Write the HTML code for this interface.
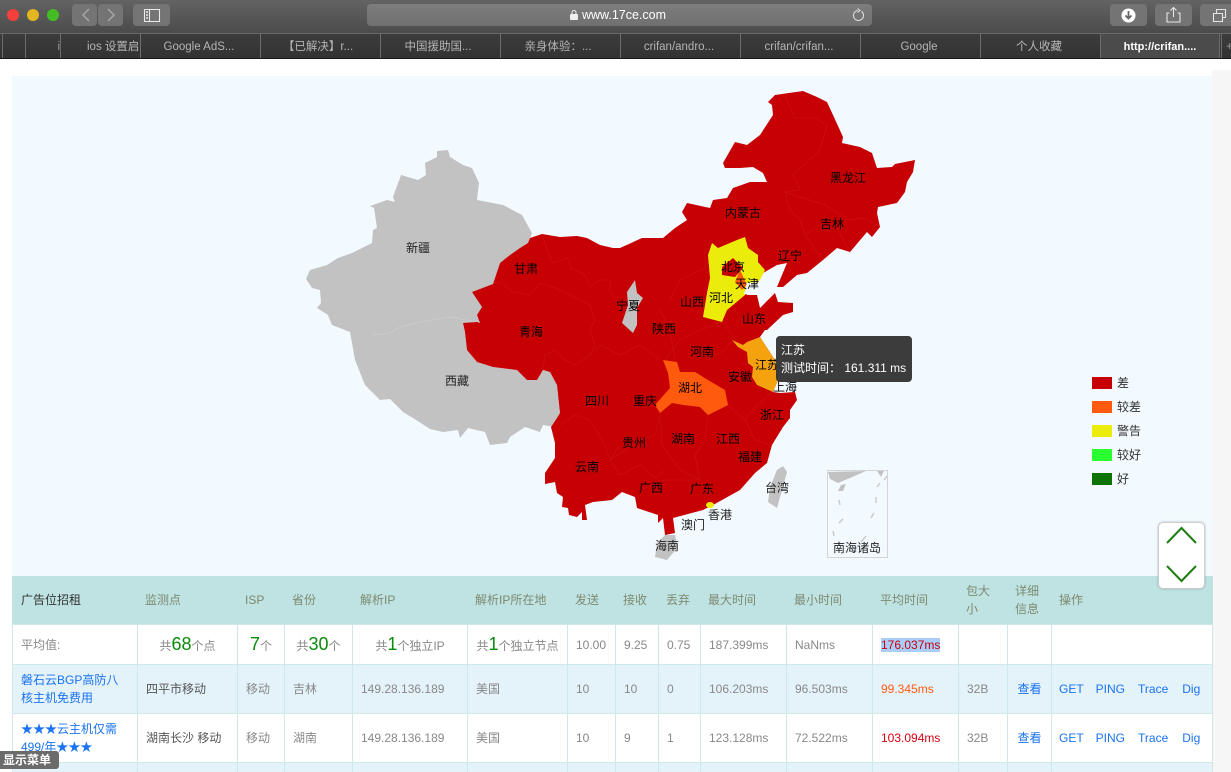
<!DOCTYPE html>
<html lang="zh">
<head>
<meta charset="utf-8">
<title>www.17ce.com</title>
<style>
*{box-sizing:border-box}
html,body{margin:0;padding:0;width:1231px;height:772px;overflow:hidden;background:#fff;font-family:"Liberation Sans","Noto Sans CJK SC",sans-serif}
#page{position:relative;width:1231px;height:772px;overflow:hidden;background:#fff}
.abs{position:absolute}
#toolbar{left:0;top:0;width:1231px;height:33px;background:linear-gradient(#636363,#4b4b4b)}
.light{position:absolute;top:9px;width:12px;height:12px;border-radius:50%}
.btn{position:absolute;top:4px;height:22px;background:#747474;border-radius:4px}
#url{position:absolute;left:367px;top:4px;width:505px;height:22px;border-radius:4px;background:linear-gradient(#7d7d7d,#707070);color:#fff;font-size:12.500px;line-height:23px;text-align:center;padding-right:3px}
#tabs{left:0;top:33px;width:1231px;height:26px;background:linear-gradient(#3c3c3c,#333);border-top:1px solid #6a6a6a;border-bottom:1px solid #191919}
.tab{position:absolute;top:0;height:24px;border-left:1px solid #6c6c6c;color:#b5b5b5;font-size:11.500px;line-height:26px;text-align:center;white-space:nowrap;overflow:hidden}
#mapbg{left:12px;top:76px;width:1200px;height:500px;background:#f2faff}
#right{left:1212px;top:70px;width:19px;height:702px;background:#f6f6f6}
svg text{font-family:"Liberation Sans","Noto Sans CJK SC",sans-serif}
#tip{left:776px;top:336px;width:136px;height:46px;background:rgba(50,50,50,.95);border-radius:4px;color:#fff;font-size:12px;line-height:18px;padding:5px 0 0 5px;white-space:nowrap}
.sw{position:absolute;left:1092px;width:20px;height:12px}
.lg{position:absolute;left:1117px;font-size:12px;color:#333;line-height:14px}
#tbl{left:12px;top:576px;width:1200px;border-collapse:collapse;table-layout:fixed;font-size:12px;color:#888}
#tbl th,#tbl td{border:1px solid #cfe8e8;padding:0 0 0 8px;font-weight:normal;text-align:left;vertical-align:middle;line-height:18px;overflow:hidden;white-space:nowrap}
#tbl th{background:#bfe3e3;color:#7d8a70;border-color:#bfe3e3;border-bottom-color:#cfe8e8;line-height:18px;padding:0 0 2px 7px}
#tbl th:first-child{padding-left:8px}
#tbl tr.h{height:48px}
#tbl tr.a{height:40px;background:#fff}
#tbl tr.b{height:49px;background:#e4f2fa}
#tbl tr.c{height:49px;background:#fff}
#tbl tr.d{height:14px;background:#e4f2fa}
#tbl tr.d td{line-height:1px;font-size:1px}
#tbl a{color:#1a73f0;text-decoration:none}
#tbl .ops{padding-left:7px}
#tbl .ops a{display:inline-block}
.g{color:#0a8a0a;font-size:18px;line-height:18px}
.ctr{text-align:center!important;padding-left:0!important}
.dark{color:#555}
#menu{left:0;top:751px;width:59px;height:18px;background:#6b6b6b;border-radius:0 3px 3px 0;color:#fff;font-size:12px;font-weight:bold;line-height:18px;padding-left:3px;white-space:nowrap}
#nav{left:1158px;top:522px;width:47px;height:67px;background:#fff;border:1px solid #ccc;border-radius:5px;box-shadow:0 0 2px rgba(0,0,0,.25)}
</style>
</head>
<body>
<div id="page">
<div id="toolbar" class="abs">
  <div class="light" style="left:7px;background:#f6403e"></div>
  <div class="light" style="left:27px;background:#e3b51f"></div>
  <div class="light" style="left:47px;background:#44bd24"></div>
  <div class="btn" style="left:72px;width:25px"></div>
  <div class="btn" style="left:98px;width:25px"></div>
  <div class="btn" style="left:133px;width:37px"></div>
  <svg class="abs" style="left:0;top:0" width="180" height="33" fill="none" stroke="#a9a9a9" stroke-width="1.400">
    <path d="M89 9l-6 6 6 6"/><path d="M108 9l6 6-6 6"/>
    <path stroke="#e8e8e8" stroke-width="1.100" d="M144.500 9.500h15v12h-15zM149.500 9.500v12"/>
    <path stroke="#e8e8e8" d="M146 12h2M146 15h2M146 18h2"/>
  </svg>
  <div id="url"><svg width="8" height="10" style="vertical-align:-1px;margin-right:4px"><rect x="0" y="4" width="8" height="6" rx="1" fill="#eee"/><path d="M2 4V2.500a2 2 0 0 1 4 0V4" fill="none" stroke="#eee"/></svg>www.17ce.com</div>
  <svg class="abs" style="left:852px;top:8px" width="14" height="15" fill="none" stroke="#dcdcdc" stroke-width="1.100"><path d="M9.500 3.500a5 5 0 1 1-3.500-1"/><path d="M5.500 0.500l2.500 2-2.500 2"/></svg>
  <div class="btn" style="left:1110px;width:37px"></div>
  <div class="btn" style="left:1155px;width:37px"></div>
  <div class="btn" style="left:1200px;width:37px"></div>
  <svg class="abs" style="left:1100px;top:0" width="131" height="33" fill="none" stroke="#e6e6e6" stroke-width="1.100">
    <circle cx="28.500" cy="15.500" r="7" fill="#fff" stroke="none"/>
    <path d="M28.500 11v7M25.500 15.500l3 3 3-3" stroke="#666" stroke-width="1.800"/>
    <path d="M69.500 13h-2.500v9h13v-9h-2.500M73.500 17V8M70.500 10.500l3-3 3 3"/>
    <path d="M113.500 13.500h9v8h-9zM116.500 13v-3.500h9v8h-3"/>
  </svg>
</div>
<div id="tabs" class="abs">
  <div class="tab" style="left:2px;width:23px"></div>
  <div class="tab" style="left:25px;width:35px;text-align:right;color:#999">i</div>
  <div class="tab" style="left:60px;width:80px;padding-left:26px;text-align:left">ios 设置启</div>
  <div class="tab" style="left:140px;width:120px;padding-right:3px">Google AdS...</div>
  <div class="tab" style="left:260px;width:120px;padding-right:5px">【已解决】r...</div>
  <div class="tab" style="left:380px;width:120px;padding-right:5px">中国援助国...</div>
  <div class="tab" style="left:500px;width:120px;padding-right:5px">亲身体验：...</div>
  <div class="tab" style="left:620px;width:120px;padding-right:3px">crifan/andro...</div>
  <div class="tab" style="left:740px;width:120px;padding-right:3px">crifan/crifan...</div>
  <div class="tab" style="left:860px;width:120px;padding-right:3px">Google</div>
  <div class="tab" style="left:980px;width:120px;padding-right:3px">个人收藏</div>
  <div class="tab" style="left:1100px;width:120px;background:#4b4b4b;color:#fff;font-weight:bold;font-size:11px;border-right:1px solid #6c6c6c">http://crifan....</div>
  <div class="tab" style="left:1221px;width:10px;color:#999;text-align:left;padding-left:4px">+</div>
</div>
<div id="right" class="abs"></div>
<div id="mapbg" class="abs"></div>
<svg class="abs" style="left:0;top:0" width="1231" height="580">
  <!-- Xinjiang and Tibet -->
  <polygon fill="#c2c2c2" points="437,151 448,150 450,157 463,165 472,168 479,183 477,200 503,205 522,215 532,233 528,243 510,255 500,263 493,284 472,292 482,307 477,315 480,323 463,323 465,332 467,350 477,362 493,367 517,370 527,380 537,380 543,370 550,372 557,385 560,413 555,427 543,425 540,432 525,427 510,437 507,443 490,445 485,432 468,428 460,438 458,430 443,432 430,429 413,418 403,412 390,399 380,400 365,385 355,360 350,332 332,325 328,315 317,308 321,303 320,290 312,288 306,279 310,270 327,265 338,258 352,253 372,243 373,230 377,228 374,208 370,206 387,200 395,202 393,197 401,175 418,180 426,175 425,163 437,157"/>
  <polyline fill="none" stroke="#cbcbcb" stroke-width="1" points="372,335 390,333 400,327 420,322 450,317 477,322"/>
  <!-- Main red -->
  <polygon fill="#c70003" points="530,238 542,234 560,237 577,236 587,238 600,245 613,248 620,248 642,238 663,238 675,228 687,220 682,212 687,203 710,208 713,200 727,198 733,188 750,182 767,182 763,173 753,167 740,168 725,168 723,163 735,142 747,145 760,135 773,115 772,105 768,102 775,95 803,91 817,97 827,102 833,115 843,137 842,143 860,147 872,153 877,168 892,167 895,164 915,160 913,172 907,182 905,192 897,203 878,207 877,213 880,227 872,237 867,232 850,252 837,248 823,260 807,273 797,275 783,287 777,287 787,263 777,265 763,273 758,282 747,295 757,295 760,308 775,293 778,302 793,303 793,312 783,315 767,330 765,330 760,337 775,360 778,380 773,392 780,393 795,392 797,400 790,410 790,418 783,427 775,440 772,445 767,463 755,473 740,490 713,505 703,510 673,518 675,533 665,535 663,518 658,523 658,515 637,508 635,497 622,492 612,500 593,502 585,505 587,520 582,520 582,512 577,517 569,515 568,508 562,507 563,497 557,493 555,482 545,484 545,473 555,458 555,443 551,427 557,418 560,413 557,385 550,372 543,370 537,380 527,380 517,370 493,367 477,362 467,350 465,332 463,323 477,322 480,323 477,315 482,307 472,292 493,284 500,263 510,255 520,248 528,243"/>
  <!-- Province borders -->
  <g fill="none" stroke="#cc1013" stroke-width="0.700">
    <polyline points="542,234 547,250 553,263 568,258 571,268 585,275 590,287 600,280 610,280 610,292 622,305"/>
    <polyline points="493,284 500,282 513,292 530,295 540,283 555,288 570,295 590,305 595,320 590,330 595,345 590,355 575,365 565,360 555,350 545,355 543,370"/>
    <polyline points="785,95 795,118 815,118 827,125 820,150 793,175 800,190 785,192 790,210 800,220 805,235 820,225 835,225 850,252"/>
    <polyline points="785,192 800,197 825,205 850,220 865,218 880,227"/>
    <polyline points="805,235 823,260"/>
    <polyline points="590,355 600,345 620,355 640,345 660,360"/>
    <polyline points="670,300 680,280 705,268"/>
    <polyline points="660,310 670,330 675,360"/>
    <polyline points="725,325 735,340"/>
    <polyline points="660,415 655,435 640,440 610,460 605,445 590,420 575,415 560,425"/>
    <polyline points="620,445 610,460 620,475 640,465 655,478 665,470"/>
    <polyline points="660,415 662,445 680,470 700,480"/>
    <polyline points="708,415 705,440 695,455 700,480 665,480 640,490"/>
    <polyline points="728,405 745,420 757,405 773,392"/>
    <polyline points="745,420 755,440 772,445"/>
    <polyline points="708,415 728,405"/>
    <polyline points="708,360 725,350 732,340"/>
    <polyline points="665,360 680,340 700,330 722,322"/>
  </g>
  <!-- Hebei -->
  <polygon fill="#ecec0a" points="745,237 748,248 758,255 758,262 765,270 760,280 748,288 745,295 727,310 722,322 703,317 707,293 710,278 708,255 712,243 718,248 737,240"/>
  <polygon fill="#c70003" points="733,258 743,268 735,277 722,275 722,267"/>
  <polygon fill="#ff5a0d" points="740,270 747,285 742,290 735,282"/>
  <polygon fill="#f2faff" points="747,283 757,282 750,295 744,294"/>
  <!-- Ningxia -->
  <polygon fill="#c2c2c2" points="635,280 637,293 643,298 637,308 637,325 633,333 622,323 628,305 627,292"/>
  <!-- Hubei -->
  <polygon fill="#ff5a0d" points="663,360 677,362 680,372 695,372 708,380 725,390 728,405 708,415 700,407 683,405 672,403 660,413 655,405 670,388 668,373"/>
  <!-- Jiangsu -->
  <polygon fill="#f5a20f" points="732,340 743,345 747,342 760,337 775,360 778,380 773,392 757,385 752,377 753,367 748,363 747,352 738,347"/>
  <!-- Taiwan, Hainan, HK -->
  <polygon fill="#c2c2c2" points="783,466 787,472 777,508 768,502 770,487 777,470"/>
  <polygon fill="#c2c2c2" points="665,535 657,543 655,557 667,560 678,547 675,535"/>
  <ellipse cx="710" cy="505" rx="4" ry="3" fill="#ecec0a"/>
  <!-- South China Sea box -->
  <rect x="827.500" y="470.500" width="60" height="87" fill="#f2faff" stroke="#d4d4d4"/>
  <polygon fill="#c2c2c2" points="828,472 866,471 850,478 838,483 830,479"/>
  <polygon fill="#c2c2c2" points="877,471 884,471 881,477"/>
  <polygon fill="#c2c2c2" points="841,485 846,484 843,491 838,491"/>
  <g stroke="#c6c6c6" stroke-width="1.300" fill="none">
    <path d="M839 500l1 5M876 497v6M877 487l3-4M884 480l3-4M874 513l-3 5M843 519l-4 4M833 531l1 5M866 536l-5 6"/>
  </g>
  <!-- Labels -->
  <g font-size="12" fill="#000" text-anchor="middle" dominant-baseline="middle" transform="translate(0,1)">
    <text x="418" y="248" fill="#222">新疆</text><text x="526" y="269">甘肃</text><text x="531" y="332">青海</text><text x="457" y="381" fill="#222">西藏</text>
    <text x="597" y="401">四川</text><text x="645" y="401">重庆</text><text x="587" y="467">云南</text><text x="634" y="443">贵州</text>
    <text x="651" y="488">广西</text><text x="702" y="489">广东</text><text x="683" y="439">湖南</text><text x="728" y="439">江西</text>
    <text x="750" y="457">福建</text><text x="772" y="415">浙江</text><text x="690" y="388">湖北</text><text x="702" y="352">河南</text>
    <text x="740" y="377">安徽</text><text x="767" y="365">江苏</text><text x="785" y="387">上海</text><text x="754" y="319">山东</text>
    <text x="721" y="298">河北</text><text x="692" y="302">山西</text><text x="664" y="329">陕西</text><text x="628" y="306">宁夏</text>
    <text x="743" y="213">内蒙古</text><text x="733" y="267">北京</text><text x="747" y="284">天津</text><text x="790" y="256">辽宁</text>
    <text x="832" y="224">吉林</text><text x="848" y="178">黑龙江</text><text x="777" y="488" fill="#222">台湾</text><text x="720" y="515" fill="#222">香港</text>
    <text x="693" y="525" fill="#222">澳门</text><text x="667" y="546" fill="#222">海南</text><text x="857" y="548" fill="#222">南海诸岛</text>
  </g>
</svg>
<div id="tip" class="abs">江苏<br>测试时间： 161.311 ms</div>
<div class="sw" style="top:377px;background:#c70003"></div><div class="lg" style="top:376px">差</div>
<div class="sw" style="top:401px;background:#ff5a0d"></div><div class="lg" style="top:400px">较差</div>
<div class="sw" style="top:425px;background:#ecec0a"></div><div class="lg" style="top:424px">警告</div>
<div class="sw" style="top:449px;background:#2aff30"></div><div class="lg" style="top:448px">较好</div>
<div class="sw" style="top:473px;background:#0e7305"></div><div class="lg" style="top:472px">好</div>
<table id="tbl" class="abs">
  <colgroup><col style="width:125px"><col style="width:100px"><col style="width:47px"><col style="width:68px"><col style="width:115px"><col style="width:100px"><col style="width:48px"><col style="width:43px"><col style="width:42px"><col style="width:86px"><col style="width:86px"><col style="width:86px"><col style="width:49px"><col style="width:44px"><col style="width:161px"></colgroup>
  <tr class="h"><th style="color:#333">广告位招租</th><th>监测点</th><th>ISP</th><th>省份</th><th>解析IP</th><th>解析IP所在地</th><th>发送</th><th>接收</th><th>丢弃</th><th>最大时间</th><th>最小时间</th><th>平均时间</th><th>包大<br>小</th><th>详细<br>信息</th><th>操作</th></tr>
  <tr class="a"><td>平均值:</td><td class="ctr">共<span class="g">68</span>个点</td><td class="ctr"><span class="g">7</span>个</td><td class="ctr">共<span class="g">30</span>个</td><td class="ctr">共<span class="g">1</span>个独立IP</td><td class="ctr">共<span class="g">1</span>个独立节点</td><td>10.00</td><td>9.25</td><td>0.75</td><td>187.399ms</td><td>NaNms</td><td><span style="background:#a9cdf7;color:#c70010">176.037ms</span></td><td></td><td></td><td></td></tr>
  <tr class="b"><td><a>磐石云BGP高防八<br>核主机免费用</a></td><td class="dark">四平市移动</td><td>移动</td><td>吉林</td><td>149.28.136.189</td><td>美国</td><td>10</td><td>10</td><td>0</td><td>106.203ms</td><td>96.503ms</td><td style="color:#ff5a0d">99.345ms</td><td>32B</td><td class="ctr"><a>查看</a></td><td class="ops"><a>GET</a><a style="margin-left:12px">PING</a><a style="margin-left:13px">Trace</a><a style="margin-left:14px">Dig</a></td></tr>
  <tr class="c"><td><a>★★★云主机仅需<br>499/年★★★</a></td><td class="dark">湖南长沙 移动</td><td>移动</td><td>湖南</td><td>149.28.136.189</td><td>美国</td><td>10</td><td>9</td><td>1</td><td>123.128ms</td><td>72.522ms</td><td style="color:#d5000f">103.094ms</td><td>32B</td><td class="ctr"><a>查看</a></td><td class="ops"><a>GET</a><a style="margin-left:12px">PING</a><a style="margin-left:13px">Trace</a><a style="margin-left:14px">Dig</a></td></tr>
  <tr class="d"><td></td><td></td><td></td><td></td><td></td><td></td><td></td><td></td><td></td><td></td><td></td><td></td><td></td><td></td><td></td></tr>
</table>
<div id="menu" class="abs">显示菜单</div>
<div id="nav" class="abs">
  <svg width="45" height="65" fill="none" stroke="#1f7d12" stroke-width="2"><path d="M8 20L22.500 5 37 20"/><path d="M8 43L22.500 58 37 43"/></svg>
</div>
</div>
</body>
</html>
